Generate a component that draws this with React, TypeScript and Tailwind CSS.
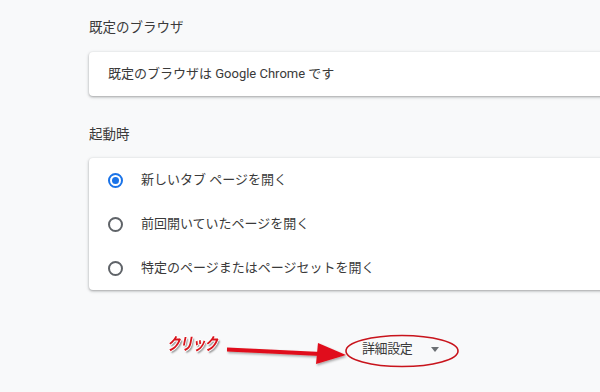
import React from 'react';

const options = [
  { label: '新しいタブ ページを開く', checked: true },
  { label: '前回開いていたページを開く', checked: false },
  { label: '特定のページまたはページセットを開く', checked: false },
];

const Radio = ({ checked }: { checked: boolean }) => (
  <span
    className={`flex h-[15px] w-[15px] items-center justify-center rounded-full border-2 ${
      checked ? 'border-[#1a73e8]' : 'border-[#5f6368]'
    }`}
  >
    {checked && <span className="h-[7px] w-[7px] rounded-full bg-[#1a73e8]" />}
  </span>
);

export default function App() {
  return (
    <div className="relative h-[392px] w-[600px] overflow-hidden bg-[#f8f9fa] font-['Roboto','Noto_Sans_CJK_JP',sans-serif] text-[#3a3a3a]">
      <div className="ml-[89px] w-[640px] pt-[18px]">
        <h2 className="text-[13.5px] leading-[18px] font-normal">既定のブラウザ</h2>
        <div className="mt-4 flex h-[44px] items-center rounded bg-white pl-[19px] text-[13px] shadow-[0_1px_2px_rgba(60,64,67,0.3),0_1px_3px_1px_rgba(60,64,67,0.15)]">
          既定のブラウザは Google Chrome です
        </div>

        <h2 className="mt-[29px] text-[13.5px] leading-[18px] font-normal">起動時</h2>
        <div className="mt-[15px] rounded bg-white shadow-[0_1px_2px_rgba(60,64,67,0.3),0_1px_3px_1px_rgba(60,64,67,0.15)]">
          {options.map((o) => (
            <div key={o.label} className="flex h-[44px] items-center pl-[19px]">
              <Radio checked={o.checked} />
              <span className="ml-[18px] text-[13px]">{o.label}</span>
            </div>
          ))}
        </div>

        <div className="mt-[43px] flex h-[32px] items-center pl-[273px]">
          <span className="text-[13px] tracking-[-0.4px]">詳細設定</span>
          <svg width="8" height="5" viewBox="0 0 8 5" className="ml-[19px] mt-[1px]">
            <path d="M0 0h8L4 5z" fill="#6b6f73" />
          </svg>
        </div>
      </div>

      {/* annotation */}
      <span className="absolute left-[167px] top-[332px] inline-block origin-left scale-x-[0.78] text-[17px] leading-[24px] font-bold italic tracking-[-1px] text-[#d8141c] [text-shadow:1px_0_0_#fff,-1px_0_0_#fff,0_1px_0_#fff,0_-1px_0_#fff,2px_2px_2px_rgba(0,0,0,0.45)]">
        クリック
      </span>
      <svg className="pointer-events-none absolute left-0 top-0" width="600" height="392">
        <defs>
          <filter id="sh" x="-10%" y="-50%" width="120%" height="200%">
            <feDropShadow dx="1" dy="1.5" stdDeviation="1" floodColor="#000" floodOpacity="0.35" />
          </filter>
        </defs>
        <g filter="url(#sh)">
          <path d="M227 347.5 L321 352 L320.6 356 L227 351.5 Z" fill="#e0101a" />
          <path d="M318 343 L346 355 L316 364 Z" fill="#e0101a" />
        </g>
        <ellipse cx="402" cy="351" rx="56" ry="15.5" fill="none" stroke="#c8141c" strokeWidth="1.6" />
      </svg>
    </div>
  );
}
